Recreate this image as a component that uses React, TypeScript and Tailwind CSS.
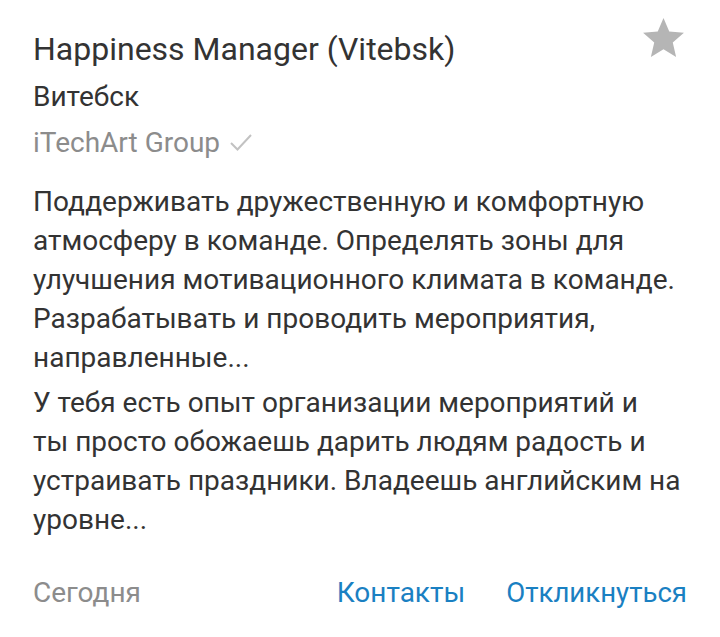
const Star = () => (
  <svg viewBox="0 0 24 24" className="w-[49px] h-[49px]" fill="#b5b5b5">
    <path d="M12 17.27L18.18 21l-1.64-7.03L22 9.24l-7.19-.61L12 2 9.19 8.63 2 9.24l5.46 4.73L5.82 21z" />
  </svg>
);

const Check = () => (
  <svg viewBox="0 0 22 18" className="w-[22px] h-[18px] -mt-[3px]" fill="none" stroke="#c2c2c2" strokeWidth="2">
    <path d="M1 10l6.5 6.5L21 2" />
  </svg>
);

const about = [
  [
    "Поддерживать дружественную и комфортную",
    "атмосферу в команде. Определять зоны для",
    "улучшения мотивационного климата в команде.",
    "Разрабатывать и проводить мероприятия,",
    "направленные...",
  ],
  [
    "У тебя есть опыт организации мероприятий и",
    "ты просто обожаешь дарить людям радость и",
    "устраивать праздники. Владеешь английским на",
    "уровне...",
  ],
];

export default function App() {
  return (
    <div className="w-[720px] h-[637px] bg-white font-['Roboto',sans-serif] pl-[33px] pr-[33px] pt-[14px] flex flex-col">
      <div className="flex justify-between items-start">
        <div className="mt-[15px] text-[32px] leading-[40px] text-[#333333]">Happiness Manager (Vitebsk)</div>
        <div className="-mr-[1px]">
          <Star />
        </div>
      </div>
      <div className="-mt-[26px] text-[28px] leading-[40px] text-[#333333]">
        <div className="mt-[34px]">Витебск</div>
        <div className="mt-[6px] flex items-center gap-[10px] text-[#8c8c8c]">
          iTechArt Group
          <Check />
        </div>
      </div>
      <div className="mt-[19px] text-[28px] leading-[39px] text-[#333333] flex flex-col gap-[6px]">
        {about.map((lines, i) => (
          <p key={i} className="whitespace-nowrap">
            {lines.map((line, j) => (
              <span key={j} className="block">
                {line}
              </span>
            ))}
          </p>
        ))}
      </div>
      <div className="mt-auto mb-[24px] flex items-center text-[28px] leading-[40px]">
        <span className="text-[#8c8c8c]">Сегодня</span>
        <span className="ml-auto text-[#1a80c2]">Контакты</span>
        <span className="ml-[41px] text-[27.6px] text-[#1a80c2]">Откликнуться</span>
      </div>
    </div>
  );
}
